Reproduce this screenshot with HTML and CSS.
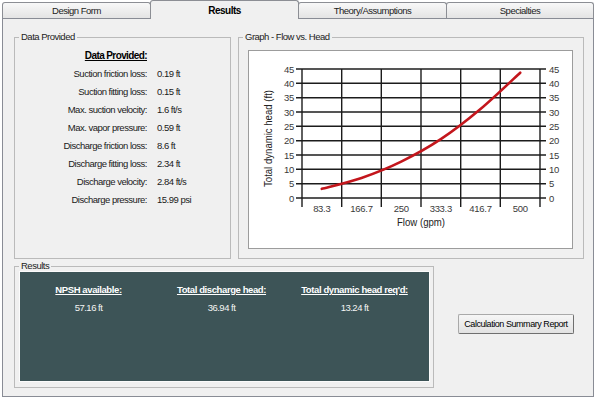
FILE: index.html
```html
<!DOCTYPE html>
<html lang="en">
<head>
    <meta charset="UTF-8">
    <title>Pump Calculator - Results</title>
    <link rel="stylesheet" href="styles.css">
</head>
<body>
    <div class="tabs">
        <div class="tab">Design Form</div>
        <div class="tab active">Results</div>
        <div class="tab">Theory/Assumptions</div>
        <div class="tab">Specialties</div>
    </div>

    <div class="panel">
        <div class="top-row">
            <fieldset class="group data-group">
                <legend>Data Provided</legend>
                <div class="data-list">
                    <span class="data-title">Data Provided:</span><span></span>
                    <span class="data-label">Suction friction loss:</span><span>0.19 ft</span>
                    <span class="data-label">Suction fitting loss:</span><span>0.15 ft</span>
                    <span class="data-label">Max. suction velocity:</span><span>1.6 ft/s</span>
                    <span class="data-label">Max. vapor pressure:</span><span>0.59 ft</span>
                    <span class="data-label">Discharge friction loss:</span><span>8.6 ft</span>
                    <span class="data-label">Discharge fitting loss:</span><span>2.34 ft</span>
                    <span class="data-label">Discharge velocity:</span><span>2.84 ft/s</span>
                    <span class="data-label">Discharge pressure:</span><span>15.99 psi</span>
                </div>
            </fieldset>

            <fieldset class="group graph-group">
                <legend>Graph - Flow vs. Head</legend>
                <div class="chart">
                    <svg width="323" height="197" viewBox="0 0 323 197">
                        <!-- grid: 0..45 ft every 5, six flow bands -->
                        <g class="grid">
                            <line x1="47" y1="147" x2="297" y2="147"/>
                            <line x1="47" y1="132.7" x2="297" y2="132.7"/>
                            <line x1="47" y1="118.3" x2="297" y2="118.3"/>
                            <line x1="47" y1="104" x2="297" y2="104"/>
                            <line x1="47" y1="89.7" x2="297" y2="89.7"/>
                            <line x1="47" y1="75.3" x2="297" y2="75.3"/>
                            <line x1="47" y1="61" x2="297" y2="61"/>
                            <line x1="47" y1="46.7" x2="297" y2="46.7"/>
                            <line x1="47" y1="32.3" x2="297" y2="32.3"/>
                            <line x1="47" y1="18" x2="297" y2="18"/>
                            <line x1="53" y1="18" x2="53" y2="156"/>
                            <line x1="92.7" y1="18" x2="92.7" y2="156"/>
                            <line x1="132.3" y1="18" x2="132.3" y2="156"/>
                            <line x1="172" y1="18" x2="172" y2="156"/>
                            <line x1="211.7" y1="18" x2="211.7" y2="156"/>
                            <line x1="251.3" y1="18" x2="251.3" y2="156"/>
                            <line x1="291" y1="18" x2="291" y2="156"/>
                        </g>
                        <g class="tick-left">
                            <text x="45" y="150.5">0</text>
                            <text x="45" y="136.2">5</text>
                            <text x="45" y="121.8">10</text>
                            <text x="45" y="107.5">15</text>
                            <text x="45" y="93.2">20</text>
                            <text x="45" y="78.8">25</text>
                            <text x="45" y="64.5">30</text>
                            <text x="45" y="50.2">35</text>
                            <text x="45" y="35.8">40</text>
                            <text x="45" y="21.5">45</text>
                        </g>
                        <g class="tick-right">
                            <text x="300" y="150.5">0</text>
                            <text x="300" y="136.2">5</text>
                            <text x="300" y="121.8">10</text>
                            <text x="300" y="107.5">15</text>
                            <text x="300" y="93.2">20</text>
                            <text x="300" y="78.8">25</text>
                            <text x="300" y="64.5">30</text>
                            <text x="300" y="50.2">35</text>
                            <text x="300" y="35.8">40</text>
                            <text x="300" y="21.5">45</text>
                        </g>
                        <g class="tick-bottom">
                            <text x="72.8" y="161">83.3</text>
                            <text x="112.5" y="161">166.7</text>
                            <text x="152.2" y="161">250</text>
                            <text x="191.8" y="161">333.3</text>
                            <text x="231.5" y="161">416.7</text>
                            <text x="271.2" y="161">500</text>
                        </g>
                        <text class="axis-title" x="172" y="175" textLength="48" lengthAdjust="spacingAndGlyphs">Flow (gpm)</text>
                        <text class="axis-title" transform="translate(23 87.5) rotate(-90)" textLength="97" lengthAdjust="spacingAndGlyphs">Total dynamic head (ft)</text>
                        <path class="curve" d="M72.8 137.8 C79.4 136.0 99.3 131.4 112.5 126.9 C125.7 122.4 139.0 117.1 152.2 110.6 C165.4 104.2 178.6 97.0 191.8 88.2 C205.0 79.5 218.3 69.2 231.5 58.1 C244.7 47.0 264.6 27.8 271.2 21.7"/>
                    </svg>
                </div>
            </fieldset>
        </div>

        <div class="bottom-row">
            <fieldset class="group results-group">
                <legend>Results</legend>
                <div class="results-board">
                    <div class="result">
                        <div class="result-title">NPSH available:</div>
                        <div>57.16 ft</div>
                    </div>
                    <div class="result">
                        <div class="result-title">Total discharge head:</div>
                        <div>36.94 ft</div>
                    </div>
                    <div class="result">
                        <div class="result-title">Total dynamic head req'd:</div>
                        <div>13.24 ft</div>
                    </div>
                </div>
            </fieldset>
            <button class="report-btn">Calculation Summary Report</button>
        </div>
    </div>
</body>
</html>
```

FILE: styles.css
```css
body {
    margin: 0;
    background-color: #fff;
    font-family: "Liberation Sans", Arial, sans-serif;
    font-size: 9.5px;
    letter-spacing: -0.5px;
    color: #000;
}

/* tab strip */
.tabs {
    display: flex;
    align-items: flex-end;
    height: 18px;
    margin: 0 3px 0 2px;
}
.tab {
    width: 149px;
    height: 16px;
    box-sizing: border-box;
    margin-right: -1px;
    border: 1px solid #8c8e94;
    border-bottom: none;
    border-radius: 3px 3px 0 0;
    background: linear-gradient(#f8f8f8, #e4e4e4);
    text-align: center;
    line-height: 15px;
    color: #222;
}
.tab:last-child {
    flex: 1;
    margin-right: 0;
}
.tab.active {
    position: relative;
    z-index: 1;
    height: 19px;
    margin-bottom: -1px;
    background: #f0f0f0;
    font-weight: bold;
    font-size: 10px;
    line-height: 19px;
    color: #000;
}

.panel {
    height: 379px;
    box-sizing: border-box;
    margin: 0 3px 0 2px;
    padding: 12px 0 0 11px;
    background-color: #f0f0f0;
    border: 1px solid #898c95;
}

.top-row {
    display: flex;
    gap: 7px;
    height: 228px;
}
.bottom-row {
    display: flex;
    align-items: center;
    margin-top: 1px;
}

/* group boxes */
.group {
    margin: 0;
    padding: 0;
    box-sizing: border-box;
    border: 1px solid #bababa;
    min-width: 0;
}
.group legend {
    margin-left: 4px;
    padding: 0 2px;
    line-height: 12px;
    color: #222;
}
.data-group {
    width: 217px;
}
.graph-group {
    width: 346px;
}
.results-group {
    width: 420px;
    height: 128px;
}

.data-list {
    display: grid;
    grid-template-columns: 132px auto;
    column-gap: 10px;
    padding-top: 4px;
    line-height: 18px;
    color: #1a1a1a;
}
.data-label,
.data-title {
    text-align: right;
    white-space: nowrap;
}
.data-title {
    font-weight: bold;
    font-size: 10px;
    letter-spacing: -0.6px;
    text-decoration: underline;
    color: #000;
}

/* chart */
.chart {
    width: 325px;
    height: 199px;
    box-sizing: border-box;
    margin: 7px 0 0 9px;
    background-color: #fff;
    border: 1px solid #9c9c9c;
}
.chart svg {
    display: block;
    font-family: "Liberation Sans", Arial, sans-serif;
    letter-spacing: 0;
}
.grid line {
    stroke: #1c1c1c;
    stroke-width: 1.4;
}
.tick-left text,
.tick-right text,
.tick-bottom text {
    font-size: 9.5px;
    letter-spacing: -0.3px;
    fill: #3a3a3a;
}
.tick-left text {
    text-anchor: end;
}
.tick-bottom text {
    text-anchor: middle;
}
.axis-title {
    font-size: 11.5px;
    fill: #222;
    text-anchor: middle;
}
.curve {
    fill: none;
    stroke: #c3161c;
    stroke-width: 2.6;
    stroke-linecap: round;
}

/* results */
.results-board {
    display: grid;
    grid-template-columns: repeat(3, 1fr);
    height: 109px;
    box-sizing: border-box;
    margin: 0 4px 0 5px;
    padding: 11px 8px 0 2px;
    background-color: #3d5457;
    box-shadow: 0 0 0 1px #fbfbfb;
    color: #f4f4f4;
    text-align: center;
    line-height: 14px;
}
.result-title {
    margin-bottom: 4px;
    font-weight: bold;
    font-size: 9.5px;
    letter-spacing: -0.4px;
    text-decoration: underline;
    white-space: nowrap;
    color: #fff;
}

.report-btn {
    width: 116px;
    height: 20px;
    margin-left: 24px;
    padding: 0;
    font-family: inherit;
    font-size: 9px;
    letter-spacing: -0.45px;
    white-space: nowrap;
    color: #000;
    background: linear-gradient(#f6f6f6, #e2e2e2);
    border: 1px solid #a9a9a9;
    border-right-color: #6f6f6f;
    border-bottom-color: #6f6f6f;
    border-radius: 2px;
}
```
